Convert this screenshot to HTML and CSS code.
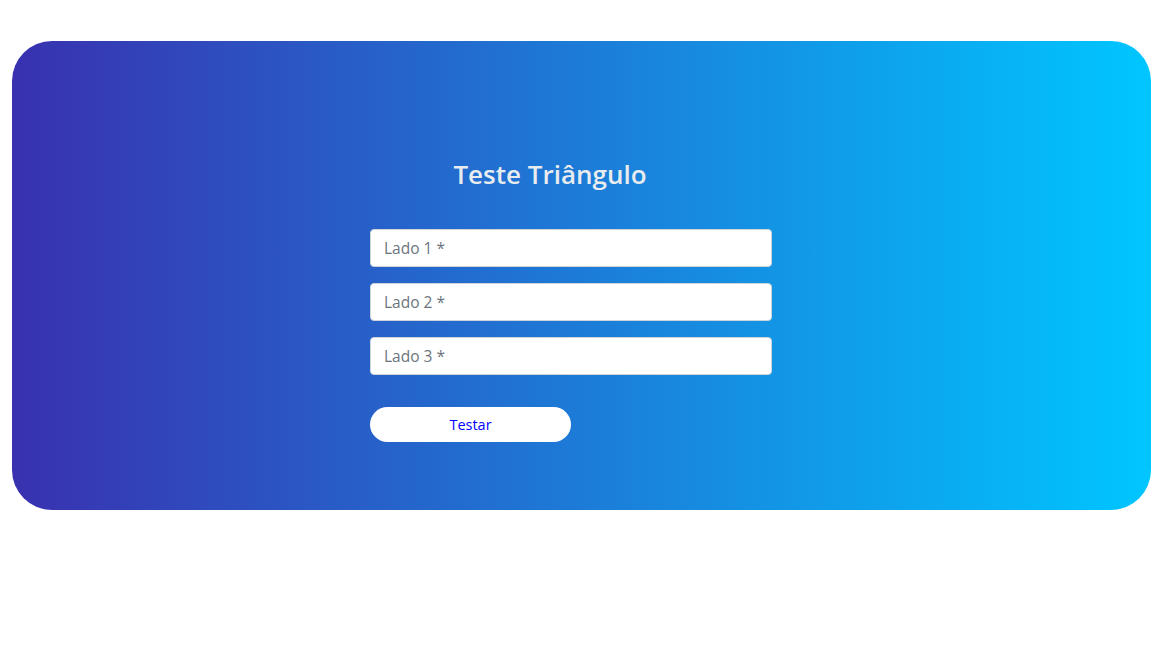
FILE: index.html
```html
<!DOCTYPE html>
<html lang="pt">
<head>
<meta charset="utf-8">
<title>Teste Triângulo</title>
<link rel="stylesheet" href="styles.css">
</head>
<body>
<div class="page">
  <section class="card">
    <div class="form-col">
      <h3 class="title">Teste Triângulo</h3>
      <form class="form">
        <input class="field" type="text" placeholder="Lado 1 *">
        <input class="field" type="text" placeholder="Lado 2 *">
        <input class="field" type="text" placeholder="Lado 3 *">
        <button class="btn" type="button">Testar</button>
      </form>
    </div>
  </section>
</div>
</body>
</html>
```
FILE: styles.css
```css
html, body {
  margin: 0;
  padding: 0;
  background: #fff;
}
body {
  font-family: "Open Sans", "Noto Sans", "Liberation Sans", sans-serif;
}
.page {
  padding: 41px 12px 0 12px;
}
.card {
  height: 469px;
  box-sizing: border-box;
  border-radius: 40px;
  background: linear-gradient(to right, #3931af, #00c6ff);
  padding: 118px 0 0 358px;
}
.form-col {
  width: 402px;
}
.title {
  width: 360px;
  margin: 0 0 40px 0;
  font-size: 26px;
  line-height: 30px;
  font-weight: 600;
  color: #e9ecef;
  text-align: center;
}
.form {
  display: flex;
  flex-direction: column;
  gap: 16px;
  align-items: flex-start;
}
.field {
  width: 100%;
  height: 38px;
  box-sizing: border-box;
  border: 1px solid #ced4da;
  border-radius: 4px;
  padding: 6px 13px;
  font-family: inherit;
  font-size: 15.5px;
  color: #495057;
  background: #fff;
  outline: none;
}
.field::placeholder {
  color: #6c757d;
  opacity: 1;
}
.btn {
  margin-top: 16px;
  width: 201px;
  height: 35px;
  border: none;
  border-radius: 18px;
  background: #fff;
  color: #0000ff;
  font-family: inherit;
  font-size: 14.5px;
  cursor: pointer;
}
```
